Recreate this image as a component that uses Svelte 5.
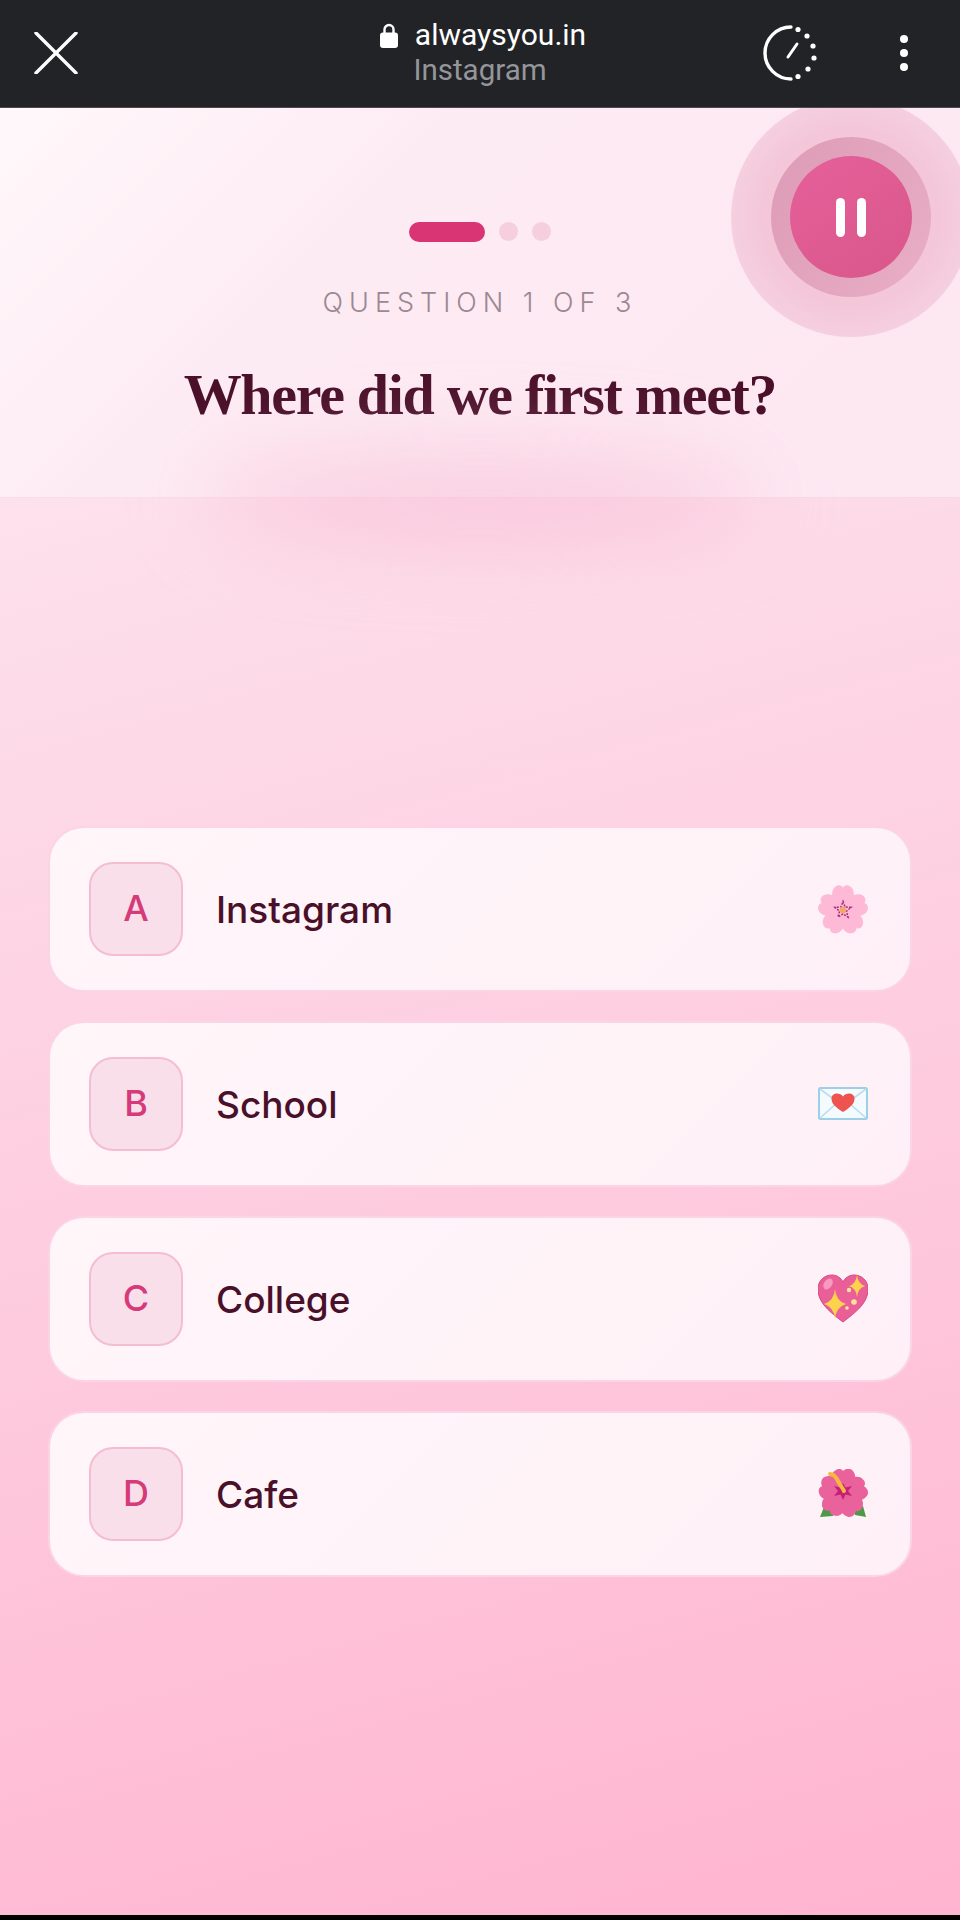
<script>
  const options = [
    { key: 'A', label: 'Instagram', icon: 'flower' },
    { key: 'B', label: 'School', icon: 'letter' },
    { key: 'C', label: 'College', icon: 'heart' },
    { key: 'D', label: 'Cafe', icon: 'hibiscus' },
  ];

  const petals = [0, 72, 144, 216, 288];
</script>

<div class="page">
  <div class="topbar">
    <svg class="close" viewBox="0 0 44 42" width="44" height="42">
      <path d="M2 1 L42 41 M42 1 L2 41" stroke="#fff" stroke-width="3.4" stroke-linecap="round" />
    </svg>
    <div class="address">
      <div class="domain">
        <svg viewBox="0 0 18 25" width="18" height="25">
          <path d="M4.5 10 V6.5 a4.5 4.5 0 0 1 9 0 V10" fill="none" stroke="#fff" stroke-width="2.4" />
          <rect x="0" y="9.5" width="18" height="15.5" rx="3" fill="#fff" />
        </svg>
        <span>alwaysyou.in</span>
      </div>
      <div class="source">Instagram</div>
    </div>
    <svg class="timer" viewBox="0 0 56 56" width="56" height="56">
      <path d="M29 2 A26 26 0 0 0 29 54" fill="none" stroke="#fff" stroke-width="3.4" stroke-linecap="round" />
      <circle cx="36" cy="4.5" r="2.6" fill="#fff" />
      <circle cx="45" cy="11" r="2.6" fill="#fff" />
      <circle cx="51" cy="21" r="2.6" fill="#fff" />
      <circle cx="52" cy="33" r="2.6" fill="#fff" />
      <circle cx="46" cy="44" r="2.6" fill="#fff" />
      <circle cx="36" cy="51.5" r="2.6" fill="#fff" />
      <path d="M26 32 L35 19" stroke="#fff" stroke-width="3" stroke-linecap="round" />
    </svg>
    <div class="menu"><i></i><i></i><i></i></div>
  </div>

  <div class="content">
    <header class="head">
      <div class="progress">
        <span class="pill"></span>
        <span class="dot"></span>
        <span class="dot"></span>
      </div>
      <div class="count">QUESTION 1 OF 3</div>
      <h1>Where did we first meet?</h1>
    </header>

    <div class="glow"></div>

    <div class="halo">
      <div class="ring">
        <button class="pause" aria-label="Pause">
          <i></i><i></i>
        </button>
      </div>
    </div>

    <div class="options">
      {#each options as o}
        <div class="card">
          <span class="letter">{o.key}</span>
          <span class="label">{o.label}</span>
          <svg class="emoji" viewBox="0 0 50 50" width="50" height="50">
            {#if o.icon === 'flower'}
              {#each petals as a}
                <g transform="rotate({a} 25 26)">
                  <path d="M25 27 C13 20 12 7 17 3 C20 0.5 23 1 25 3.5 C27 1 30 0.5 33 3 C38 7 37 20 25 27Z" fill="#fdb9d5" />
                </g>
              {/each}
              <path d="M25 17.5 L27 23 L33 23.4 L28.4 27.2 L30 33 L25 29.8 L20 33 L21.6 27.2 L17 23.4 L23 23Z" fill="#fbc4da" stroke="#a9267c" stroke-width="1.5" stroke-dasharray="2 1.3" />
              <circle cx="25" cy="26" r="3.4" fill="#f4a56a" />
            {:else if o.icon === 'letter'}
              <rect x="1" y="9" width="48" height="31" rx="1.5" fill="#f3fbff" stroke="#9dcfe8" stroke-width="2" />
              <path d="M2 10 L25 27 L48 10 M2 39 L19 24 M48 39 L31 24" fill="none" stroke="#bcdcee" stroke-width="1.6" />
              <path d="M25 33 C17 28 13.5 24.5 13.5 19.5 C13.5 14.5 21 12.5 25 17.5 C29 12.5 36.5 14.5 36.5 19.5 C36.5 24.5 33 28 25 33Z" fill="#ef5350" />
            {:else if o.icon === 'heart'}
              <path d="M25 48 C12 38 0 29 0 15 C0 6 7 1 14 1 C19 1 23 4 25 8 C27 4 31 1 36 1 C43 1 50 6 50 15 C50 29 38 38 25 48Z" fill="#ea5f98" stroke="#d94682" stroke-width="1" />
              <ellipse cx="10" cy="10" rx="4" ry="6" transform="rotate(35 10 10)" fill="#f79ac0" />
              <path d="M17 15 Q18 27 28 30 Q18 33 17 45 Q16 33 6 30 Q16 27 17 15Z" fill="#fdd34d" />
              <path d="M39 1 Q40 10 47 12 Q40 14 39 23 Q38 14 31 12 Q38 10 39 1Z" fill="#fdd34d" />
              <circle cx="31" cy="16" r="2.2" fill="#fde3a0" />
              <circle cx="36" cy="28" r="2.8" fill="#fde3a0" />
              <circle cx="29" cy="34" r="1.8" fill="#fde3a0" />
            {:else}
              <path d="M2 48 L6 38 L15 40 L15 47Z M48 48 L45 37 L36 39 L37 46Z" fill="#4c9a47" />
              {#each petals as a}
                <g transform="rotate({a} 25 24)">
                  <path d="M25 25 C11 19 11 4 18 1 C21 -1 24 0 25 2 C28 -1 33 -1 35 2 C40 8 37 19 25 25Z" fill="#e9629b" />
                </g>
              {/each}
              <path d="M25 14 L27.5 18.5 L34 17 L30 22 L34 27 L27.5 25.5 L25 31 L22.5 25.5 L16 27 L20 22 L16 17 L22.5 18.5Z" fill="#c51f78" />
              <path d="M12 5 C15 5 18 8 20 12 C22 16 24 18 26 22" fill="none" stroke="#f6b93f" stroke-width="4" stroke-linecap="round" />
            {/if}
          </svg>
        </div>
      {/each}
    </div>
  </div>

  <div class="nav"></div>
</div>

<style>
  :global(body) {
    margin: 0;
    background: #000;
  }

  .page {
    width: 960px;
    height: 1920px;
    display: flex;
    flex-direction: column;
    overflow: hidden;
    font-family: Roboto, "Liberation Sans", sans-serif;
  }

  .topbar {
    flex: 0 0 108px;
    background: #222327;
    border-bottom: 1px solid #4d484d;
    box-sizing: border-box;
    position: relative;
    display: flex;
    align-items: center;
    padding: 0 34px;
    color: #fff;
  }

  .close { margin-top: -2px; }

  .address {
    position: absolute;
    left: 0;
    right: 0;
    top: 17px;
    display: flex;
    flex-direction: column;
    align-items: center;
  }

  .domain {
    display: flex;
    align-items: center;
    gap: 17px;
    font-size: 30px;
    line-height: 36px;
    margin-left: 6px;
  }

  .source {
    font-size: 29.5px;
    line-height: 35px;
    color: #94969a;
  }

  .timer { margin-left: auto; margin-right: 82px; margin-top: -2px; }

  .menu {
    display: flex;
    flex-direction: column;
    gap: 6px;
    margin-right: 18px;
    margin-top: -2px;
  }
  .menu i {
    width: 8px;
    height: 8px;
    border-radius: 50%;
    background: #fff;
  }

  .content {
    flex: 1;
    position: relative;
    overflow: hidden;
    background: linear-gradient(165deg, #fdeef4 0%, #fddce9 27%, #fec8dc 65%, #ffb4cf 100%);
  }

  .glow {
    position: absolute;
    left: 200px;
    top: 345px;
    width: 560px;
    height: 90px;
    border-radius: 50%;
    background: #f7b8d1;
    filter: blur(42px);
    opacity: 0.55;
  }

  .head {
    position: relative;
    height: 390px;
    box-sizing: border-box;
    padding-top: 114px;
    display: flex;
    flex-direction: column;
    align-items: center;
    background: linear-gradient(135deg, #fff8fb 0%, #fdebf3 35%, #fde7f1 100%);
    border-bottom: 1px solid rgba(245, 205, 222, 0.6);
  }

  .progress {
    display: flex;
    align-items: center;
    gap: 14px;
    height: 19px;
  }
  .pill {
    width: 76px;
    height: 20px;
    border-radius: 10px;
    background: #d93473;
  }
  .dot {
    width: 19px;
    height: 19px;
    border-radius: 50%;
    background: #f6cfdf;
  }

  .count {
    margin-top: 46px;
    font-family: Inter, sans-serif;
    font-weight: 300;
    font-size: 27px;
    line-height: 32px;
    letter-spacing: 6px;
    color: #9c8792;
  }

  h1 {
    margin: 40px 0 0;
    font-family: "Liberation Serif", serif;
    font-weight: 700;
    font-size: 58px;
    line-height: 72px;
    letter-spacing: -1.3px;
    color: #4a1029;
  }

  .halo {
    position: absolute;
    left: 731px;
    top: -11px;
    width: 240px;
    height: 240px;
    border-radius: 50%;
    background: radial-gradient(circle, #f3c6d8 50%, #f8dde9 100%);
    display: flex;
    align-items: center;
    justify-content: center;
  }

  .ring {
    width: 160px;
    height: 160px;
    border-radius: 50%;
    background: linear-gradient(120deg, #dd9bb6, #e9aec6);
    display: flex;
    align-items: center;
    justify-content: center;
  }

  .pause {
    width: 122px;
    height: 122px;
    padding: 0;
    border: 0;
    border-radius: 50%;
    background: linear-gradient(145deg, #e6609a, #d8578a);
    display: flex;
    align-items: center;
    justify-content: center;
    gap: 12px;
  }
  .pause i {
    width: 9px;
    height: 39px;
    border-radius: 5px;
    background: #fff;
  }

  .options {
    position: relative;
    margin-top: 328px;
    padding: 0 48px;
    display: flex;
    flex-direction: column;
    gap: 29px;
  }

  .card {
    height: 166px;
    box-sizing: border-box;
    padding: 0 42px 0 39px;
    display: flex;
    align-items: center;
    border-radius: 36px;
    border: 2px solid rgba(250, 205, 224, 0.8);
    background: linear-gradient(135deg, #fff6fa, #fef0f6);
  }

  .letter {
    width: 94px;
    height: 94px;
    box-sizing: border-box;
    flex: none;
    display: flex;
    align-items: center;
    justify-content: center;
    border-radius: 24px;
    border: 2px solid #f5bdd2;
    background: #f9dfea;
    color: #d63a78;
    font-family: Inter, sans-serif;
    font-weight: 500;
    font-size: 36px;
    padding-bottom: 2px;
  }

  .label {
    margin-left: 33px;
    font-family: Inter, sans-serif;
    font-weight: 500;
    font-size: 37px;
    color: #4a1029;
  }

  .emoji { margin-left: auto; flex: none; }

  .nav {
    flex: 0 0 5px;
    background: #000;
  }
</style>
